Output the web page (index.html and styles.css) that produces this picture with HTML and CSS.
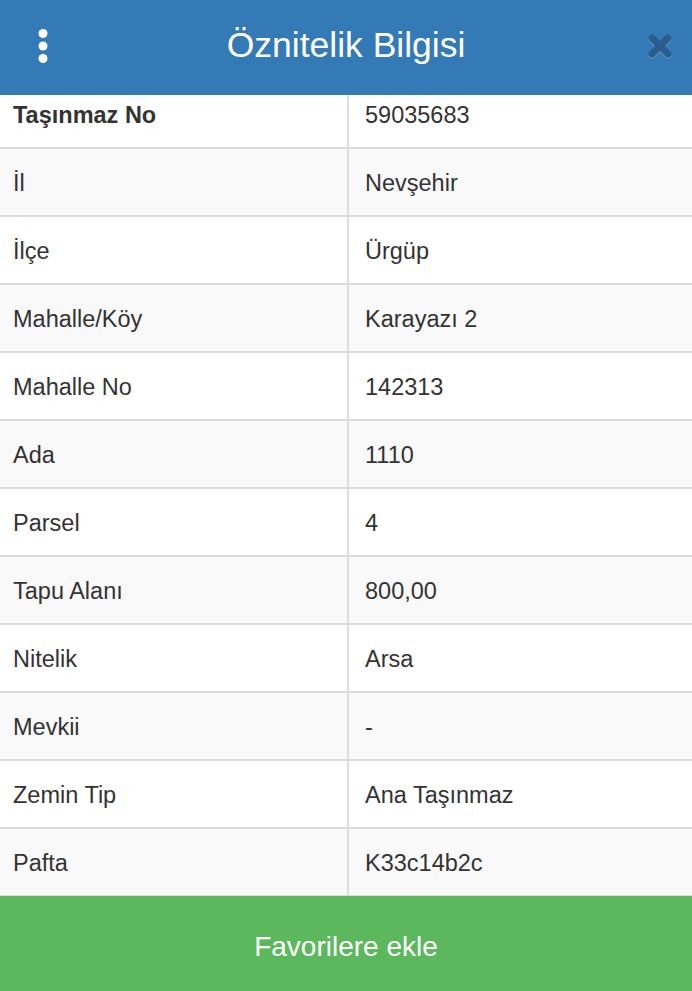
FILE: index.html
```html
<!DOCTYPE html>
<html lang="tr">
<head>
    <meta charset="UTF-8">
    <meta name="viewport" content="width=device-width, initial-scale=1.0">
    <title>Öznitelik Bilgisi</title>
    <link rel="stylesheet" href="styles.css">
</head>
<body>
    <div class="panel">
        <div class="header">
            <button class="menu-btn" aria-label="Menü">
                <svg width="12" height="36" viewBox="0 0 12 36">
                    <circle cx="6" cy="5.5" r="4.5" fill="#fff"/>
                    <circle cx="6" cy="18" r="4.5" fill="#fff"/>
                    <circle cx="6" cy="30.5" r="4.5" fill="#fff"/>
                </svg>
            </button>
            <h1>Öznitelik Bilgisi</h1>
            <button class="close-btn" aria-label="Kapat">
                <svg width="28" height="28" viewBox="0 0 28 28">
                    <g stroke-width="7" stroke-linecap="round">
                        <path d="M6 7 L22 23 M22 7 L6 23" stroke="#6d9dcb"/>
                        <path d="M6 6 L22 22 M22 6 L6 22" stroke="#2a5d8b"/>
                    </g>
                </svg>
            </button>
        </div>

        <div class="content">
            <div class="rows">
                <div class="row"><div class="label bold">Taşınmaz No</div><div class="value">59035683</div></div>
                <div class="row"><div class="label">İl</div><div class="value">Nevşehir</div></div>
                <div class="row"><div class="label">İlçe</div><div class="value">Ürgüp</div></div>
                <div class="row"><div class="label">Mahalle/Köy</div><div class="value">Karayazı 2</div></div>
                <div class="row"><div class="label">Mahalle No</div><div class="value">142313</div></div>
                <div class="row"><div class="label">Ada</div><div class="value">1110</div></div>
                <div class="row"><div class="label">Parsel</div><div class="value">4</div></div>
                <div class="row"><div class="label">Tapu Alanı</div><div class="value">800,00</div></div>
                <div class="row"><div class="label">Nitelik</div><div class="value">Arsa</div></div>
                <div class="row"><div class="label">Mevkii</div><div class="value">-</div></div>
                <div class="row"><div class="label">Zemin Tip</div><div class="value">Ana Taşınmaz</div></div>
                <div class="row"><div class="label">Pafta</div><div class="value">K33c14b2c</div></div>
            </div>
        </div>

        <button class="fav-btn">Favorilere ekle</button>
    </div>
</body>
</html>
```

FILE: styles.css
```css
body {
    margin: 0;
    font-family: "Liberation Sans", Arial, sans-serif;
    color: #333;
    background: #fff;
}
.panel {
    display: flex;
    flex-direction: column;
    height: 991px;
    overflow: hidden;
}
.header {
    flex: 0 0 95px;
    height: 95px;
    display: grid;
    grid-template-columns: 86px 1fr 86px;
    align-items: center;
    background-color: #337ab7;
    padding-bottom: 4px;
    box-sizing: border-box;
}
.header h1 {
    margin: 0;
    font-size: 35.5px;
    font-weight: normal;
    color: #fff;
    text-align: center;
}
.header button {
    background: none;
    border: none;
    padding: 0;
    cursor: pointer;
    display: flex;
    align-items: center;
    justify-content: center;
}
.close-btn {
    justify-self: end;
    width: 64px;
}
.content {
    flex: 1;
    overflow: hidden;
}
.rows {
    margin-top: -14px;
}
.row {
    display: grid;
    grid-template-columns: 349px 1fr;
    height: 68px;
    box-sizing: border-box;
    border-bottom: 2px solid #ddd;
    font-size: 23.5px;
}
.row:nth-child(even) {
    background-color: #f9f9f9;
}
.label, .value {
    display: flex;
    align-items: center;
    padding-top: 3px;
    box-sizing: border-box;
}
.label {
    padding-left: 13px;
    border-right: 2px solid #ddd;
}
.label.bold {
    font-weight: bold;
}
.value {
    padding-left: 16px;
}
.fav-btn {
    flex: 0 0 95px;
    width: 100%;
    border: none;
    background-color: #5cb85c;
    color: #fff;
    font-family: "Liberation Sans", Arial, sans-serif;
    font-size: 28px;
    padding: 6px 0 0;
    cursor: pointer;
}
```
